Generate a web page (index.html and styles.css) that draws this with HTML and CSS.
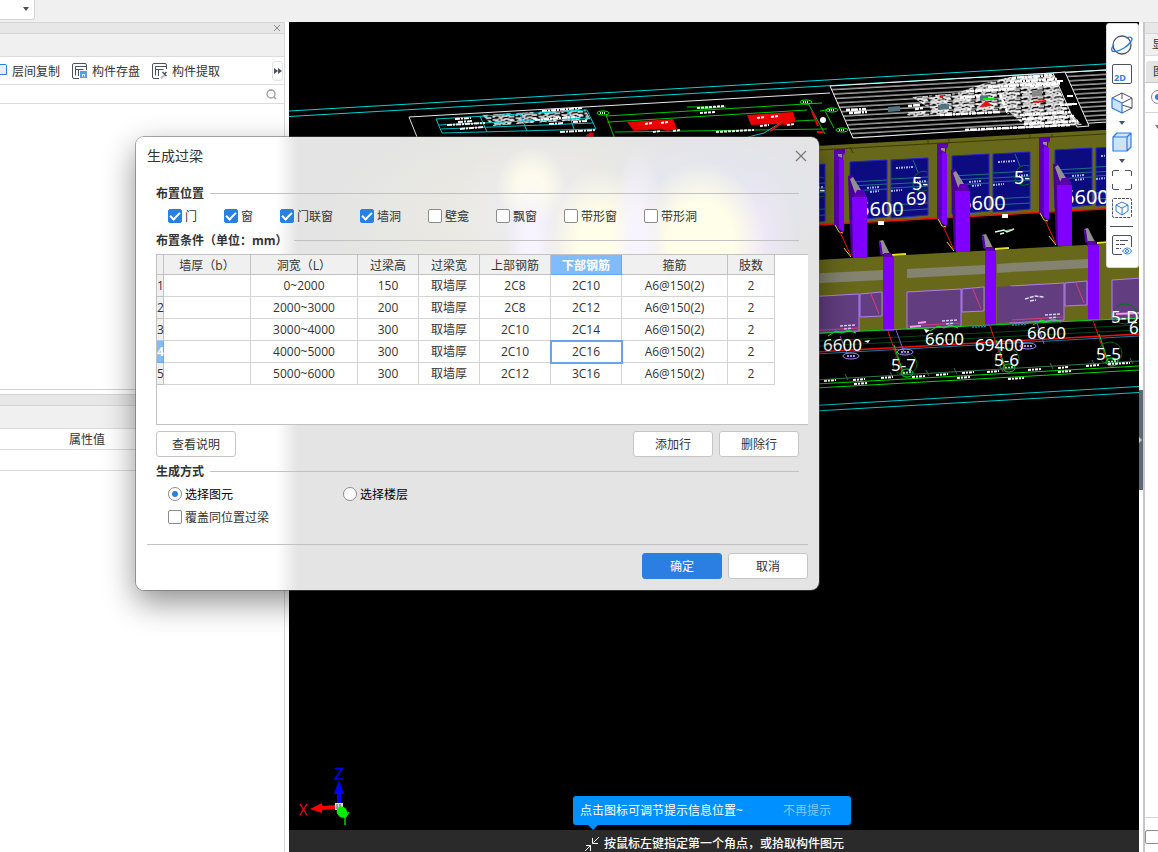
FILE: index.html
```html
<!DOCTYPE html>
<html lang="zh-CN">
<head>
  <meta charset="utf-8">
  <title>生成过梁</title>
  <link rel="stylesheet" href="styles.css">
</head>
<body>
  <div class="topbar">
    <div class="combo">
      <select aria-label="楼层"><option></option></select>
      <svg width="6" height="4" viewBox="0 0 6 4"><path d="M0 0h6L3 4z" fill="#4a5160"/></svg>
    </div>
  </div>

  <div class="workspace">
    <aside class="left-panel">
      <div class="panel-head">
        <button class="icon-btn" aria-label="关闭面板">
          <svg width="8" height="8" viewBox="0 0 8 8"><path d="M1 1l6 6M7 1L1 7" stroke="#8a8a8a" fill="none"/></svg>
        </button>
      </div>
      <div class="panel-sub"></div>
      <div class="tools">
        <button class="tool tool-cut">
          <svg width="7" height="16" viewBox="0 0 7 16"><path d="M-2 1.500H5.500a1 1 0 0 1 1 1V11.500H-2" fill="#e3efff" stroke="#2a7de1"/></svg>
          <span>层间复制</span>
        </button>
        <button class="tool">
          <svg width="16" height="16" viewBox="0 0 16 16" fill="none" stroke="#4a5160">
            <path d="M7 15.500H2a1.500 1.500 0 0 1-1.500-1.500V2A1.500 1.500 0 0 1 2 .5h11A1.500 1.500 0 0 1 14.500 2v5"/>
            <path d="M3.500 12.500V3.500H14M3.500 6.500h8M6.500 7v6"/>
            <rect x="8.500" y="8.500" width="6" height="6" fill="#5a9cec" stroke="#5a9cec"/><path d="M10.500 13.500v-2h2v2" stroke="#fff"/>
          </svg>
          <span>构件存盘</span>
        </button>
        <button class="tool">
          <svg width="16" height="16" viewBox="0 0 16 16" fill="none" stroke="#4a5160">
            <path d="M7 15.500H2a1.500 1.500 0 0 1-1.500-1.500V2A1.500 1.500 0 0 1 2 .5h11A1.500 1.500 0 0 1 14.500 2v4"/>
            <path d="M3.500 12.500V3.500H14M3.500 6.500h8M6.500 7v6"/>
            <path d="M9 15.500l4-4" stroke="#b6bcc8" stroke-width="2"/><path d="M10.500 9l4 4M12.500 11l2-2" stroke-width="1.500"/>
          </svg>
          <span>构件提取</span>
        </button>
        <button class="more" aria-label="更多">
          <svg width="8" height="6" viewBox="0 0 8 6"><path d="M0 0l4 3-4 3zM4 0l4 3-4 3z" fill="#4a5160"/></svg>
        </button>
      </div>
      <div class="search">
        <input type="text" aria-label="搜索构件">
        <svg width="12" height="12" viewBox="0 0 12 12" fill="none" stroke="#9a9a9a" stroke-width="1.300"><circle cx="6" cy="6" r="4"/><path d="M9 9l2 2"/></svg>
      </div>
      <div class="list"></div>
      <div class="panel-head second"></div>
      <div class="panel-sub"></div>
      <div class="prop-head"><span>属性值</span></div>
      <div class="prop-row"></div>
    </aside>

    <main class="viewport">
      <svg class="scene" width="850" height="808" viewBox="289 22 850 808">
        <defs>
          <pattern id="scribble" width="23" height="9" patternUnits="userSpaceOnUse" patternTransform="rotate(-4)">
            <path d="M0 1h3v1h2V0h4v2h3V1h4v1h5M1 4h5v-1h2v2h4V4h3v1h3V3h4M0 7h2V6h5v2h3V7h5V6h2v2h5" fill="none" stroke="#fff" stroke-width="1.300"/>
          </pattern>
          <pattern id="hatch" width="40" height="4.500" patternUnits="userSpaceOnUse" patternTransform="rotate(-3.200)">
            <path d="M0 1h40" stroke="#d8d8d8" stroke-width="1.300"/>
          </pattern>

          <!-- one bay of the rear wall -->
          <g id="windows">
            <path d="M850 162l37-2v57l-37 3zM891 160l37-2v57l-37 3z" fill="#0c0c80" stroke="#2222d0"/>
            <path d="M850 182l37-2M850 186l37-2M850 191l37-2M891 179l37-2M891 184l37-2M891 188l37-2M891 205l37-2M891 211l37-2M913 160l5 12" stroke="#1a7080" fill="none"/>
            <path d="M896 168l17-1M867 188l13-1M870 192l9-1M891 191l11-1M914 182l13-1" stroke="#a9b4ee" stroke-width="2" stroke-dasharray="2 1 1 1" fill="none"/>
            <path d="M927 172c-8-3-14 4-14 11s6 10 14 7" stroke="#0e6a28" fill="none"/>
            <text x="858" y="216" class="span">6600</text>
            <text x="912" y="190" class="axis">5-</text>
          </g>
          <g id="columns">
            <path d="M834 150l3-1h8v4l-2 2v78l-9-8z" fill="#5a00b0"/>
            <path d="M838 154h4v4l-4-2z" fill="#909090"/>
            <path d="M839 158l5 2v72l-5-3z" fill="#8000ff"/>
            <path d="M835 225l4 7 4 1M844 248l7 9" stroke="#e8e020" fill="none"/>
            <path d="M840 232l11 24" stroke="#f01010" fill="none"/>
            <path d="M848 176l4-1 8 14v8l-7 61-2-3z" fill="#4a0096"/>
            <path d="M850 179l3-2 8 13-5 6z" fill="#909090"/>
            <path d="M853 198l4-8h7l3 8z" fill="#5a00b0"/>
            <path d="M852 197h15v61h-14z" fill="#8000ff"/>
            <path d="M879 241l4-1 7 14h-9z" fill="#909090"/>
            <path d="M879 241l2 1 2 14-3-2z" fill="#5a00b0"/>
            <path d="M892 255l14-1" stroke="#e8e020" stroke-width="2"/>
          </g>
          <!-- one bay of the front wall -->
          <g id="front">
            <path d="M907 269l78-4v9l-78 4z" fill="#838370"/>
            <path d="M907 292l54-3v37l-54 3zM962 289l22-2v24l-22 1z" fill="#623e80" stroke="#b27cf4"/>
            <path d="M908 326l53-3M973 289l8 20" stroke="#e03a78" fill="none"/>
            <path d="M942 321l16-1M946 324l8-1" stroke="#d8c8f4" stroke-width="1.500" stroke-dasharray="3 1" fill="none"/>
            <path d="M930 331l8-5 6 2 6-3 8 3" stroke="#00ff20" fill="none"/>
          </g>
          <g id="axis-mark">
            <path d="M888 331l15 44" stroke="#f01010" fill="none"/>
            <path d="M894 345l10 30" stroke="#00d820" fill="none"/>
            <ellipse cx="905" cy="364" rx="12" ry="11" fill="none" stroke="#086018"/>
            <ellipse cx="907" cy="373" rx="6" ry="4" fill="none" stroke="#00e020"/>
            <path d="M903 373l9-1" stroke="#7dff8c" stroke-width="2" stroke-dasharray="2 1"/>
          </g>
          <g id="grid-bubble" fill="none" stroke="#00ff00"><ellipse rx="6" ry="2"/><path d="M-3 0h6" stroke="#caffca" stroke-width="2" stroke-dasharray="1 1"/></g>
        </defs>

        <!-- drawing sheets behind the model -->
        <path d="M289 111L1139 62M289 116.500L1139 68" stroke="#00d4d4" fill="none"/>
        <path d="M417 137l-8-20 421-24" stroke="#e8e8e8" fill="none"/>
        <path d="M482 115l103-6 6 11-62 3-36 3z" fill="url(#scribble)"/>
        <path d="M436 119l151-9 9 19-154 4zM439 125l150-7M441 129l152-6M480 116l7 16M520 114l7 17M568 111l6 18" stroke="#00c8d0" fill="none"/>
        <path d="M455 119l16-1M458 122l15-1M447 125l38-2M460 129l24-2M535 120l40-3M549 124l15-1M573 122l14-1M542 111l40-3M560 132l36-2" stroke="#fff" stroke-width="2" stroke-dasharray="5 1 2 1" fill="none"/>
        <path d="M586 136l4-3h3v4zM607 122l3 1M613 134l2 3" stroke="#f00000" fill="#f00000"/>
        <path d="M606 115l8 22M606 116l216-13M609 122l198-12M615 132l212-3M808 103l17 31M825 111l9 17M820 111l12-2M700 109l26-2M796 121l20-1M687 107h24" stroke="#00c800" fill="none"/>
        <path d="M627 122l46-3 4 10-9 2-8-2-26 2zM747 115l46-3 3 10-7 1 3 3-12-2-29 1z" fill="#f00000"/>
        <path d="M645 124l7-1M661 123l7-1M757 118l8-1M771 117l7-1M653 132l8-1M673 131l7-1M760 126l9-1M787 125l8-1M697 108l28-2M700 113l15-1M716 132l38-2" stroke="#fff" stroke-width="2" stroke-dasharray="3 1" fill="none"/>
        <path d="M782 122l-18 11-16 4" stroke="#20c8d8" fill="none"/><path d="M783 122l-13 9M812 111l6 15M817 132h7" stroke="#f00000" stroke-width="2"/>
        <ellipse cx="823" cy="120" rx="3" ry="3" fill="#fff"/>
        <use href="#grid-bubble" x="603" y="113"/><use href="#grid-bubble" x="806" y="102"/><use href="#grid-bubble" x="832" y="110"/><use href="#grid-bubble" x="842" y="130"/>
        <path d="M830 86l309-18v52l-286 18z" fill="url(#hatch)" stroke="#f0f0f0"/>
        <path d="M1053 73l12-1 24 54-12 1z" fill="#000" stroke="#f0f0f0"/>
        <path d="M1009 77l44-3 15 36 14 15-55 3-20-18-30 2-25 3-40 2-10-4 30-3-20-13 45-4 25-9z" fill="url(#scribble)"/>
        <path d="M1012 78l40-3M1010 82l47-3M988 87l72-4M970 91l45-2M1030 86l30-2M940 115l60-3M1020 115l50-3M1022 119l53-3M1024 124l54-3M965 130l105-5M846 110l20-1M849 113l18-1M908 106l12-1M915 109l8-1M960 98l20-2M1000 94l8 20M1060 105l14-1" stroke="#fff" stroke-width="2.500" stroke-dasharray="4 1 7 1 2 1" fill="none"/>
        <path d="M1057 81h6M1067 96h6M1072 104h5" stroke="#fff" stroke-width="2"/>
        <path d="M888 107l12-1v5l-12 1zM938 105l11-1v5l-11 1zM980 96l8-1v5l-8 1z" fill="#527480"/>
        <path d="M983 99h11" stroke="#00f000" stroke-width="2"/><path d="M982 106l4-4 4 3zM940 97h3M1033 102l13-1" stroke="#f01010" fill="#f01010" stroke-width="2"/><path d="M1032 91l10-1v6l-10 1z" fill="#888"/>

        <!-- rear wall -->
        <path d="M780 148L1139 128V207L780 227z" fill="#68681a"/>
        <path d="M819 150L1139 132M850 147l3 6M928 139v5M949 139v5M1030 134v5M1052 134v4" stroke="#3c3c08" fill="none"/>
        <path d="M780 227l359-20" stroke="#f01010" stroke-width="1.500"/>
        <use href="#windows" x="-103" y="6"/><use href="#windows"/><use href="#windows" x="102" y="-6"/><use href="#windows" x="205" y="-12"/>
        <text x="906" y="205" class="axis">69</text>
        <path d="M878 223h6M1002 216h6" stroke="#fff" stroke-width="4"/>
        <path d="M995 232l9-2 3 2 7-3M1000 234l4-1" stroke="#dfffe8" stroke-width="1.500" fill="none"/><path d="M1004 231l10-2" stroke="#6fe08c"/>

        <path d="M780 262L1139 242V318L780 335z" fill="#68681a"/>
        <path d="M780 276l103-5v9l-103 5z" fill="#838370"/>
        <use href="#columns"/><use href="#columns" x="103" y="-6"/><use href="#columns" x="205" y="-12"/>
        <use href="#front" x="-102" y="5"/><use href="#front"/><use href="#front" x="103" y="-6"/>
        <path d="M997 287l15-1v36l-15 1z" fill="#623e80"/><path d="M997 264l15-1v9l-15 1z" fill="#838370"/>
        <path d="M1112 280l30-2v40l-30 2z" fill="#623e80" stroke="#b27cf4"/>
        <path d="M1025 299l10-3 9 1M1030 301l6-1" stroke="#e0d8f4" stroke-width="1.500" stroke-dasharray="4 1" fill="none"/>
        <path d="M883 258l1-5h7l3 5zM985 252l1-5h7l3 5zM1087 246l1-5h7l3 5z" fill="#5a00b0"/>
        <path d="M883 257h11v74h-11zM985 251h11v74h-11zM1088 245h11v74h-11z" fill="#8000ff"/>

        <!-- ground axes and dimensions -->
        <path d="M780 335L1139 318" stroke="#00d820"/>
        <path d="M780 343l359-18M780 348l359-18" stroke="#064a10"/>
        <path d="M780 354l359-20" stroke="#f01010" stroke-width="1.500"/>
        <path d="M780 356l359-20" stroke="#1878a8"/>
        <path d="M840 336l7 17M896 330l8 22M1036 320l8 24" stroke="#8a5ad0"/>
        <g fill="none" stroke="#b08aff"><ellipse cx="851" cy="356" rx="8" ry="3"/><ellipse cx="905" cy="352" rx="8" ry="3"/><ellipse cx="1028" cy="346" rx="8" ry="3"/><path d="M847 356h8M901 352h8M1024 346h8" stroke-width="2" stroke-dasharray="2 1"/></g>
        <path d="M972 327l15-1M1012 325l14-1" stroke="#108a90" stroke-width="2" stroke-dasharray="2 1"/>
        <path d="M918 323l8-1M910 327l11-1M1116 314l24-1" stroke="#ff90ff" stroke-width="2"/>
        <path d="M924 329l6 1-4 3zM864 341l6-1-2 3z" fill="#fff"/>
        <use href="#axis-mark"/><use href="#axis-mark" x="102" y="-5"/><use href="#axis-mark" x="205" y="-11"/>
        <path d="M780 382l359-21" stroke="#347850"/>
        <path d="M780 386l359-20M780 390l359-20" stroke="#00d800"/>
        <path d="M845 374l3 6M890 372l3 6M926 370l3 6M954 368l3 6M1000 366l3 6M1050 363l3 6M1092 360l3 6M1130 358l3 6" stroke="#347850"/>
        <path d="M824 381l12-1M853 380l12-1M881 378l12-1M912 377l13-1M936 375l12-1M962 373l12-1M987 372l12-1M1028 370l13-1M1058 368l11-1M1086 366l13-1M1108 364l22-1M854 384l13-1M957 378l13-1M1008 379l16-1M1058 372l14-1" stroke="#fff" stroke-width="2" stroke-dasharray="3 1 2 1"/>
        <path d="M780 407.500l359-21M780 413l359-20.500" stroke="#00c8c8"/>
        <ellipse cx="1125" cy="314" rx="12" ry="10" fill="none" stroke="#08701c"/>
        <text x="823" y="351">6600</text>
        <text x="925" y="345">6600</text>
        <text x="1027" y="339">6600</text>
        <text x="975" y="351">69400</text>
        <text x="891" y="371">5-7</text>
        <text x="994" y="366">5-6</text>
        <text x="1096" y="360">5-5</text>
        <text x="1111" y="323">5-D</text>
        <text x="1129" y="334">6</text>

        <!-- view axes -->
        <path d="M339 806V793" stroke="#0000ff" stroke-width="4"/><path d="M334 794l5-14 5 14z" fill="#0000ff"/>
        <path d="M337 807l-15 1" stroke="#ff0000" stroke-width="4"/><path d="M310 809l12-6v10z" fill="#ff0000"/>
        <path d="M335 803h8v7h-8z" fill="#ddd"/><path d="M337 804v5M340 804v4" stroke="#555"/>
        <ellipse cx="342" cy="812" rx="5" ry="6" fill="#00f000" transform="rotate(-35 342 812)"/>
        <path d="M335 768.500h7l-7 10.500h8" stroke="#0000ff" stroke-width="1.500" fill="none"/>
        <path d="M300 804l7 11M307 804l-7 11" stroke="#ff0000" stroke-width="1.300" fill="none"/>
        <path d="M343 813l2 5 4-6M345 818v7" stroke="#00f000" stroke-width="1.300" fill="none"/>
      </svg>

      <nav class="view-tools">
        <button aria-label="动态观察">
          <svg width="22" height="22" viewBox="0 0 22 22" fill="none"><circle cx="11" cy="11" r="9" stroke="#4a5160" stroke-width="1.300"/><path d="M3 11C-.5 15 0 18 4 17.500c6-.5 13-5.500 16-10C22.500 3.500 20 2 15 4" stroke="#2a7de1" stroke-width="1.400"/></svg>
        </button>
        <button aria-label="二维">
          <svg width="20" height="20" viewBox="0 0 20 20" fill="none"><rect x=".5" y=".5" width="19" height="19" rx="1.500" stroke="#4a5160"/><text x="2" y="17" class="two-d">2D</text></svg>
        </button>
        <button aria-label="三维">
          <svg width="22" height="22" viewBox="0 0 22 22" fill="none" stroke="#4a5160" stroke-linejoin="round"><path d="M11 1l10 5v10l-10 5M11 11l10-5M11 1L1 6M11 1v6M11 13l10 3"/><path d="M1 6l10 5v10L1 16z" fill="#cfe2fb" stroke="#2a7de1" stroke-width="1.200"/></svg>
        </button>
        <svg class="caret" width="6" height="4" viewBox="0 0 6 4"><path d="M0 0h6L3 4z" fill="#4a5160"/></svg>
        <button aria-label="显示模式">
          <svg width="20" height="20" viewBox="0 0 20 20" fill="#cfe2fb" stroke="#2a7de1" stroke-width="1.200" stroke-linejoin="round"><path d="M1 5l4-4h14v14l-4 4H1zM1 5h14v14M15 5l4-4"/></svg>
        </button>
        <svg class="caret" width="6" height="4" viewBox="0 0 6 4"><path d="M0 0h6L3 4z" fill="#4a5160"/></svg>
        <button aria-label="全屏">
          <svg width="20" height="20" viewBox="0 0 20 20" fill="none" stroke="#4a5160"><path d="M.5 6V2A1.500 1.500 0 0 1 2 .5h5M13 .5h5A1.500 1.500 0 0 1 19.500 2v4M19.500 14v4a1.500 1.500 0 0 1-1.500 1.500h-5M7 19.500H2A1.500 1.500 0 0 1 .5 18v-4"/></svg>
        </button>
        <button aria-label="选择显示">
          <svg width="20" height="20" viewBox="0 0 20 20" fill="none"><rect x=".5" y=".5" width="19" height="19" rx="1.500" stroke="#4a5160" stroke-dasharray="3 1"/><path d="M10 4l6 3v6l-6 4-6-4V7zM4 7l6 3 6-3M10 10v7" stroke="#2a7de1"/></svg>
        </button>
        <hr>
        <button aria-label="显示设置">
          <svg width="20" height="20" viewBox="0 0 20 20" fill="none" stroke="#4a5160"><path d="M10 19.500H2A1.500 1.500 0 0 1 .5 18V2A1.500 1.500 0 0 1 2 .5h16A1.500 1.500 0 0 1 19.500 2v10M4 5.500h3M8 5.500h8M4 9.500h3M8 9.500h5M4 13.500h3M8 13.500h1"/><path d="M10.500 16c3-4 7-4 9 0-2 4-6 4-9 0z" stroke="#2a7de1"/><circle cx="15" cy="16" r="1.500" stroke="#2a7de1"/></svg>
        </button>
      </nav>

      <div class="hint">
        <span>点击图标可调节提示信息位置~</span>
        <a href="#">不再提示</a>
      </div>
      <footer class="status">
        <svg width="16" height="16" viewBox="0 0 16 16" fill="none" stroke="#fff"><path d="M15 1L9.500 6.500M8.500 2v5.500H14M1 15l5.500-5.500M2 9.500h4.500V15"/></svg>
        <span>按鼠标左键指定第一个角点，或拾取构件图元</span>
      </footer>
    </main>

    <div class="splitter"><button aria-label="收起面板"><svg width="3" height="6" viewBox="0 0 3 6"><path d="M0 0l3 3-3 3z" fill="#c8ccd2"/></svg></button></div>

    <aside class="right-panel">
      <div class="panel-head"></div>
      <div class="right-title">显示</div>
      <div class="right-tabs"><button>图元</button></div>
      <div class="right-option"><input type="radio" name="show" aria-label="图元显示" checked></div>
      <div class="right-list"><svg width="6" height="4" viewBox="0 0 6 4"><path d="M0 0h6L3 4z" fill="#777"/></svg></div>
      <div class="right-foot"><input type="checkbox" aria-label="恢复默认"></div>
    </aside>
  </div>

  <form class="dialog" role="dialog" aria-labelledby="dlg-title">
    <div class="dialog-head">
      <span id="dlg-title">生成过梁</span>
      <button type="button" class="icon-btn" aria-label="关闭">
        <svg width="12" height="12" viewBox="0 0 12 12"><path d="M1 1l10 10M11 1L1 11" stroke="#777" stroke-width="1.200" fill="none"/></svg>
      </button>
    </div>

    <div class="dialog-body">
      <div class="group-title">布置位置</div>
      <div class="checks">
        <label><input type="checkbox" checked>门</label>
        <label><input type="checkbox" checked>窗</label>
        <label><input type="checkbox" checked>门联窗</label>
        <label><input type="checkbox" checked>墙洞</label>
        <label><input type="checkbox">壁龛</label>
        <label><input type="checkbox">飘窗</label>
        <label><input type="checkbox">带形窗</label>
        <label><input type="checkbox">带形洞</label>
      </div>

      <div class="group-title">布置条件（单位：mm）</div>
      <div class="grid">
        <table>
          <colgroup>
            <col class="c-no"><col class="c-b"><col class="c-l"><col class="c-h"><col class="c-h">
            <col class="c-bar"><col class="c-bar"><col class="c-hoop"><col class="c-leg">
          </colgroup>
          <thead>
            <tr><th></th><th>墙厚（b）</th><th>洞宽（L）</th><th>过梁高</th><th>过梁宽</th><th>上部钢筋</th><th class="active">下部钢筋</th><th>箍筋</th><th>肢数</th></tr>
          </thead>
          <tbody>
            <tr><th>1</th><td></td><td>0~2000</td><td>150</td><td>取墙厚</td><td>2C8</td><td>2C10</td><td>A6@150(2)</td><td>2</td></tr>
            <tr><th>2</th><td></td><td>2000~3000</td><td>200</td><td>取墙厚</td><td>2C8</td><td>2C12</td><td>A6@150(2)</td><td>2</td></tr>
            <tr><th>3</th><td></td><td>3000~4000</td><td>300</td><td>取墙厚</td><td>2C10</td><td>2C14</td><td>A6@150(2)</td><td>2</td></tr>
            <tr><th class="active">4</th><td></td><td>4000~5000</td><td>300</td><td>取墙厚</td><td>2C10</td><td class="current">2C16</td><td>A6@150(2)</td><td>2</td></tr>
            <tr><th>5</th><td></td><td>5000~6000</td><td>300</td><td>取墙厚</td><td>2C12</td><td>3C16</td><td>A6@150(2)</td><td>2</td></tr>
          </tbody>
        </table>
      </div>

      <div class="row-buttons">
        <button type="button" class="btn">查看说明</button>
        <span class="spacer"></span>
        <button type="button" class="btn">添加行</button>
        <button type="button" class="btn">删除行</button>
      </div>

      <div class="group-title">生成方式</div>
      <div class="radios">
        <label><input type="radio" name="mode" checked>选择图元</label>
        <label><input type="radio" name="mode">选择楼层</label>
      </div>
      <div class="checks"><label><input type="checkbox">覆盖同位置过梁</label></div>
    </div>

    <div class="dialog-foot">
      <button type="button" class="btn primary">确定</button>
      <button type="button" class="btn">取消</button>
    </div>
  </form>
</body>
</html>
```
FILE: styles.css
```css
*,
*::before,
*::after {
  box-sizing: border-box;
}

body {
  margin: 0;
  height: 100vh;
  display: flex;
  flex-direction: column;
  overflow: hidden;
  background: #f0f0f0;
  color: #333;
  font: 12px/18px "Open Sans", "Noto Sans CJK SC", sans-serif;
}

button,
input,
select {
  font: inherit;
  color: inherit;
  margin: 0;
  padding: 0;
}

svg {
  display: block;
  flex: none;
}

/* check boxes and radios */
input[type="checkbox"],
input[type="radio"] {
  appearance: none;
  flex: none;
  width: 14px;
  height: 14px;
  border: 1px solid #8c8c8c;
  border-radius: 2px;
  background: #fff;
}

input[type="radio"] {
  border-radius: 50%;
}

input[type="checkbox"]:checked {
  border-color: #2b7fe3;
  background: #2b7fe3;
}

input[type="checkbox"]:checked::before {
  content: "";
  display: block;
  width: 10px;
  height: 6px;
  margin: 2px 1px;
  border-left: 2px solid #fff;
  border-bottom: 2px solid #fff;
  transform: rotate(-45deg);
}

input[type="radio"]:checked::before {
  content: "";
  display: block;
  width: 6px;
  height: 6px;
  margin: 3px;
  border-radius: 50%;
  background: #2b7fe3;
}

.icon-btn {
  display: flex;
  border: none;
  background: none;
}

.topbar {
  flex: none;
  height: 22px;
}

.combo {
  position: relative;
  width: 35px;
}

.combo select {
  display: block;
  appearance: none;
  width: 100%;
  height: 20px;
  border: 1px solid #d4d4d4;
  border-top: none;
  border-left: none;
  border-radius: 0 0 3px 0;
  background: #fff;
}

.combo svg {
  position: absolute;
  right: 6px;
  top: 7px;
}

.workspace {
  flex: 1;
  display: flex;
  min-height: 0;
  background: #fff;
}

/* left panel */
.left-panel {
  flex: none;
  width: 285px;
  margin-right: 4px;
  display: flex;
  flex-direction: column;
  border-right: 1px solid #d8d8d8;
}

.panel-head {
  flex: none;
  height: 12px;
  display: flex;
  align-items: center;
  justify-content: flex-end;
  padding-right: 3px;
  background: #e7e7e7;
  border-top: 1px solid #d4d4d4;
  border-bottom: 1px solid #d4d4d4;
}

.panel-sub {
  flex: none;
  height: 23px;
  background: #f0f0f0;
  border-bottom: 1px solid #dcdcdc;
}

.tools {
  flex: none;
  height: 28px;
  display: flex;
  align-items: center;
  gap: 12px;
  border-bottom: 1px solid #dcdcdc;
}

.tool {
  display: flex;
  align-items: center;
  gap: 4px;
  border: none;
  background: none;
  white-space: nowrap;
}

.tool span {
  padding-top: 2px;
}

.tool-cut {
  gap: 5px;
}

.more {
  width: 11px;
  height: 20px;
  margin: 0 1px 0 auto;
  display: flex;
  align-items: center;
  justify-content: center;
  border: 1px solid #e4e4e4;
  border-radius: 3px;
  background: #fff;
}

.search {
  flex: none;
  height: 19px;
  display: flex;
  align-items: center;
  padding-right: 7px;
  border-bottom: 1px solid #dcdcdc;
}

.search input {
  flex: 1;
  height: 16px;
  border: none;
  outline: none;
}

.list {
  flex: none;
  height: 286px;
  border-bottom: 1px solid #d0d0d0;
}

.second {
  margin-top: 4px;
}

.prop-head,
.prop-row {
  flex: none;
  height: 21px;
  border-bottom: 1px solid #dcdcdc;
}

.prop-head {
  padding: 2px 0 0 69px;
}

/* 3D view */
.viewport {
  flex: 1;
  position: relative;
  min-width: 0;
  display: flex;
  flex-direction: column;
  justify-content: flex-end;
  overflow: hidden;
  background: #000;
}

.scene {
  position: absolute;
  left: 0;
  top: 0;
}

.scene text {
  font: 17px "Noto Sans", sans-serif;
  fill: #fff;
}

.scene .span {
  font-size: 20px;
}

.scene .axis {
  font-size: 18px;
}

.view-tools {
  position: absolute;
  top: 1px;
  right: 0;
  width: 33px;
  height: 245px;
  padding: 10px 2px 0 0;
  display: flex;
  flex-direction: column;
  align-items: center;
  gap: 8px;
  border: 1px solid #d8d8d8;
  border-radius: 3px;
  background: #fff;
}

.view-tools button {
  display: flex;
  border: none;
  background: none;
}

.view-tools .caret {
  margin: -1px 0;
}

.view-tools hr {
  width: 23px;
  margin: 0;
  border: none;
  border-top: 1px solid #4a5160;
}

.view-tools .two-d {
  font: bold 9px "Open Sans", sans-serif;
  fill: #2a7de1;
}

.hint {
  position: absolute;
  left: 284px;
  bottom: 27px;
  width: 278px;
  height: 29px;
  padding: 1px 20px 0 7px;
  display: flex;
  align-items: center;
  justify-content: space-between;
  border-radius: 3px;
  background: #0090ff;
  color: #fff;
}

.hint::after {
  content: "";
  position: absolute;
  left: 15px;
  top: 100%;
  border: 5px solid transparent;
  border-top-color: #0090ff;
  border-bottom: none;
}

.hint a {
  color: #80c8ff;
  text-decoration: none;
}

.status {
  position: relative;
  flex: none;
  height: 22px;
  display: flex;
  align-items: flex-end;
  justify-content: center;
  gap: 4px;
  background: #2a2a2a;
  color: #fff;
  font-weight: 500;
  line-height: 16px;
}

/* right edge */
.splitter {
  flex: none;
  width: 4px;
  padding-top: 368px;
}

.splitter button {
  width: 4px;
  height: 100px;
  display: flex;
  align-items: center;
  border: none;
  background: #5f6876;
}

.right-panel {
  flex: none;
  width: 15px;
  display: flex;
  flex-direction: column;
  overflow: hidden;
  border-left: 2px solid #c4c8cc;
}

.right-title,
.right-tabs,
.right-option,
.right-foot {
  flex: none;
  white-space: nowrap;
}

.right-title {
  height: 22px;
  padding: 2px 0 0 7px;
  background: #f0f0f0;
  border-bottom: 1px solid #dcdcdc;
}

.right-tabs {
  height: 27px;
  padding: 5px 0 0 1px;
  border-bottom: 1px solid #c8c8c8;
}

.right-tabs button {
  width: 40px;
  height: 21px;
  padding-left: 7px;
  text-align: left;
  border: none;
  border-radius: 3px 0 0 0;
  background: #e4e4e4;
}

.right-option {
  height: 30px;
  padding: 7px 0 0 6px;
  border-bottom: 1px solid #d4d4d4;
}

.right-list {
  flex: 1;
  padding: 12px 0 0 10px;
  border-bottom: 1px solid #d4d4d4;
}

.right-foot {
  height: 34px;
  padding: 12px 0 0 0;
}

.dialog {
  position: absolute;
  left: 136px;
  top: 137px;
  width: 683px;
  border-radius: 8px;
  background:
    radial-gradient(closest-side, #f8f4ff 20%, transparent) 370px 20px / 50px 170px no-repeat,
    radial-gradient(closest-side, #f8f4ff 20%, transparent) 475px 10px / 54px 190px no-repeat,
    radial-gradient(closest-side, #fffee8 30%, transparent) 360px 10px / 70px 80px no-repeat,
    radial-gradient(closest-side, #fffee8 40%, transparent) 410px 30px / 110px 150px no-repeat,
    radial-gradient(closest-side, #fffee8 50%, transparent) 500px 25px / 130px 160px no-repeat,
    radial-gradient(closest-side, #f0e8fa, transparent) 580px 30px / 80px 150px no-repeat,
    radial-gradient(closest-side, #ecebf6, transparent) 320px 0 / 160px 150px no-repeat,
    radial-gradient(closest-side, #e5e6f3, transparent) 430px -20px / 290px 160px no-repeat,
    radial-gradient(closest-side, #efeee2, transparent) 190px -20px / 440px 200px no-repeat,
    linear-gradient(to right, #fff 140px, #e4e4e4 162px);
  box-shadow: 0 0 0 1px rgba(90, 90, 90, 0.5), 0 12px 32px rgba(0, 0, 0, 0.45);
}

.dialog-head {
  height: 38px;
  padding: 0 12px 0 11px;
  display: flex;
  align-items: center;
  justify-content: space-between;
  font-size: 14px;
}

.dialog-body {
  padding: 9px 20px 18px;
}

.group-title {
  display: flex;
  align-items: flex-start;
  gap: 6px;
  height: 18px;
  font-weight: bold;
  line-height: 20px;
}

.group-title::after {
  content: "";
  flex: 1;
  align-self: center;
  height: 1px;
  background: #c2c2c2;
}

.checks,
.radios {
  display: flex;
  gap: 27px;
  height: 18px;
  margin: 5px 0 6px 12px;
  line-height: 20px;
}

.checks label,
.radios label {
  display: flex;
  align-items: flex-start;
  gap: 3px;
}

.checks input,
.radios input {
  margin-top: 2px;
}

.radios {
  gap: 0;
  margin-bottom: 5px;
  color: #000;
}

.radios label {
  width: 175px;
}

.radios + .checks {
  margin-bottom: 0;
}

.grid {
  height: 171px;
  margin: 5px -9px 6px 0;
  border: 1px solid #c2c2c2;
  border-right: none;
  background: #fff;
}

.grid table {
  table-layout: fixed;
  width: 618px;
  border-spacing: 0;
}

.c-no { width: 7px; }
.c-b { width: 87px; }
.c-l { width: 107px; }
.c-h { width: 61px; }
.c-bar { width: 71px; }
.c-hoop { width: 106px; }
.c-leg { width: 47px; }

.grid th,
.grid td {
  height: 22px;
  padding: 0;
  text-align: center;
  font-weight: normal;
  line-height: 18px;
  white-space: nowrap;
  border-right: 1px solid #d4d4d4;
  border-bottom: 1px solid #d4d4d4;
}

.grid th {
  background: #f0f0f0;
  border-color: #c2c2c2;
}

.grid thead th {
  height: 20px;
  padding-top: 2px;
  line-height: 17px;
}

.grid tbody th {
  text-align: left;
}

.grid th.active {
  background: #80bbfb;
  border-color: #68a8ea;
  color: #fff;
  font-weight: bold;
}

.grid td.current {
  outline: 2px solid #68a5e8;
  outline-offset: -1px;
}

.row-buttons {
  display: flex;
  gap: 6px;
  margin-bottom: 5px;
}

.spacer {
  flex: 1;
}

.btn {
  width: 80px;
  height: 26px;
  padding-top: 2px;
  border: 1px solid #c6c6c6;
  border-radius: 3px;
  background: #fff;
}

.btn.primary {
  border-color: #2b7fe3;
  background: #2b7fe3;
  color: #fff;
}

.dialog-foot {
  display: flex;
  justify-content: flex-end;
  gap: 6px;
  margin: 0 11px;
  padding: 8px 0 11px;
  border-top: 1px solid #c2c2c2;
}
```
